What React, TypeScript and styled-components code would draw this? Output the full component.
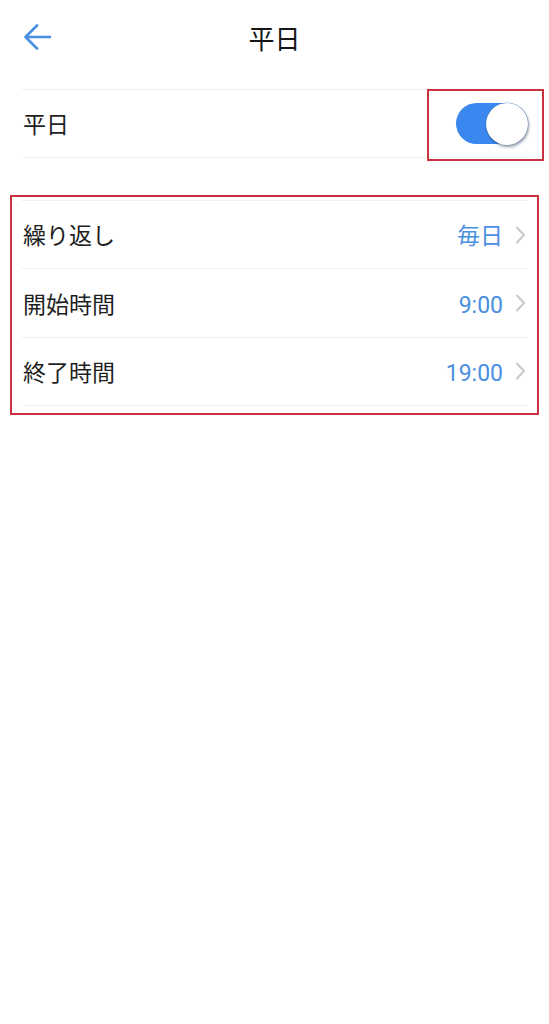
import styled, { createGlobalStyle } from "styled-components";

const GlobalStyle = createGlobalStyle`
  html, body {
    margin: 0;
    padding: 0;
    background-color: #ffffff;
  }
  body {
    font-family: Roboto, "Noto Sans CJK JP", "Noto Sans", sans-serif;
    color: #1f1f1f;
    -webkit-font-smoothing: antialiased;
  }
`;

const Screen = styled.div`
  width: 549px;
  min-height: 1024px;
  background-color: #ffffff;
`;

const Header = styled.header`
  display: grid;
  grid-template-columns: 1fr auto 1fr;
  align-items: center;
  height: 78px;
  padding: 0 22px;
`;

const BackButton = styled.button`
  justify-self: start;
  align-self: start;
  margin-top: 23px;
  margin-left: 1px;
  padding: 0;
  border: none;
  background: none;
  display: flex;
  cursor: pointer;
`;

const Title = styled.h1`
  margin: 0;
  font-size: 26px;
  font-weight: 400;
  color: #161616;
  line-height: 1;
  padding-top: 1px;
`;

const Section = styled.div`
  margin: 11px 21px 0 22px;
  border-top: 1px solid #efefef;
`;

const Row = styled.div<{ $h?: number }>`
  display: flex;
  align-items: center;
  justify-content: space-between;
  height: ${(p) => p.$h ?? 67}px;
  border-bottom: 1px solid #efefef;
`;

const Label = styled.span`
  font-size: 23px;
  color: #1f1f1f;
  margin-left: 1px;
  line-height: 1;
  padding-top: 4px;
`;

const Annotated = styled.div`
  position: relative;
`;

const Mark = styled.span`
  position: absolute;
  left: -29px;
  right: -16px;
  top: -14px;
  bottom: -17px;
  border: 2px solid #c8333f;
  pointer-events: none;
`;

const Switch = styled.div<{ $on: boolean }>`
  position: relative;
  width: 72px;
  height: 41px;
  border-radius: 21px;
  background-color: ${(p) => (p.$on ? "#3a88ef" : "#d0d0d0")};
`;

const Knob = styled.span<{ $on: boolean }>`
  position: absolute;
  top: 0;
  ${(p) => (p.$on ? "right: 0;" : "left: 0;")}
  width: 42px;
  height: 42px;
  border-radius: 50%;
  background-color: #ffffff;
  box-shadow: 1px 2px 3px rgba(20, 40, 80, 0.45),
    0 0 0 0.5px rgba(40, 70, 120, 0.35);
`;

const Boxed = styled.div`
  margin: 37px 10px 0 10px;
  border: 2px solid #c8333f;
  padding: 3px 9px 7px 10px;
`;

const List = styled.div`
  border-top: 1px solid #efefef;
`;

const ValueGroup = styled.div`
  display: flex;
  align-items: center;
  gap: 12px;
  margin-right: 2px;
`;

const Value = styled.span`
  font-size: 23px;
  color: #4a90e0;
  line-height: 1;
  padding-top: 4px;
`;

const Chevron = () => (
  <svg width="11" height="18" viewBox="0 0 11 18" fill="none">
    <polyline
      points="2,1.5 9,9 2,16.5"
      stroke="#c9c9c9"
      strokeWidth="2"
      strokeLinecap="round"
      strokeLinejoin="round"
    />
  </svg>
);

const BackArrow = () => (
  <svg width="28" height="28" viewBox="0 0 28 28" fill="none">
    <path
      d="M27 14 H3 M14 2.5 L2.5 14 L14 25.5"
      stroke="#4a90e2"
      strokeWidth="2.6"
      strokeLinecap="round"
      strokeLinejoin="round"
    />
  </svg>
);

const settings = [
  { label: "繰り返し", value: "毎日" },
  { label: "開始時間", value: "9:00" },
  { label: "終了時間", value: "19:00" },
];

export default function App() {
  return (
    <Screen>
      <GlobalStyle />
      <Header>
        <BackButton aria-label="戻る">
          <BackArrow />
        </BackButton>
        <Title>平日</Title>
        <span />
      </Header>

      <Section>
        <Row>
          <Label>平日</Label>
          <Annotated>
            <Switch $on>
              <Knob $on />
            </Switch>
            <Mark />
          </Annotated>
        </Row>
      </Section>

      <Boxed>
        <List>
          {settings.map((s) => (
            <Row key={s.label} $h={67.4}>
              <Label>{s.label}</Label>
              <ValueGroup>
                <Value>{s.value}</Value>
                <Chevron />
              </ValueGroup>
            </Row>
          ))}
        </List>
      </Boxed>
    </Screen>
  );
}
